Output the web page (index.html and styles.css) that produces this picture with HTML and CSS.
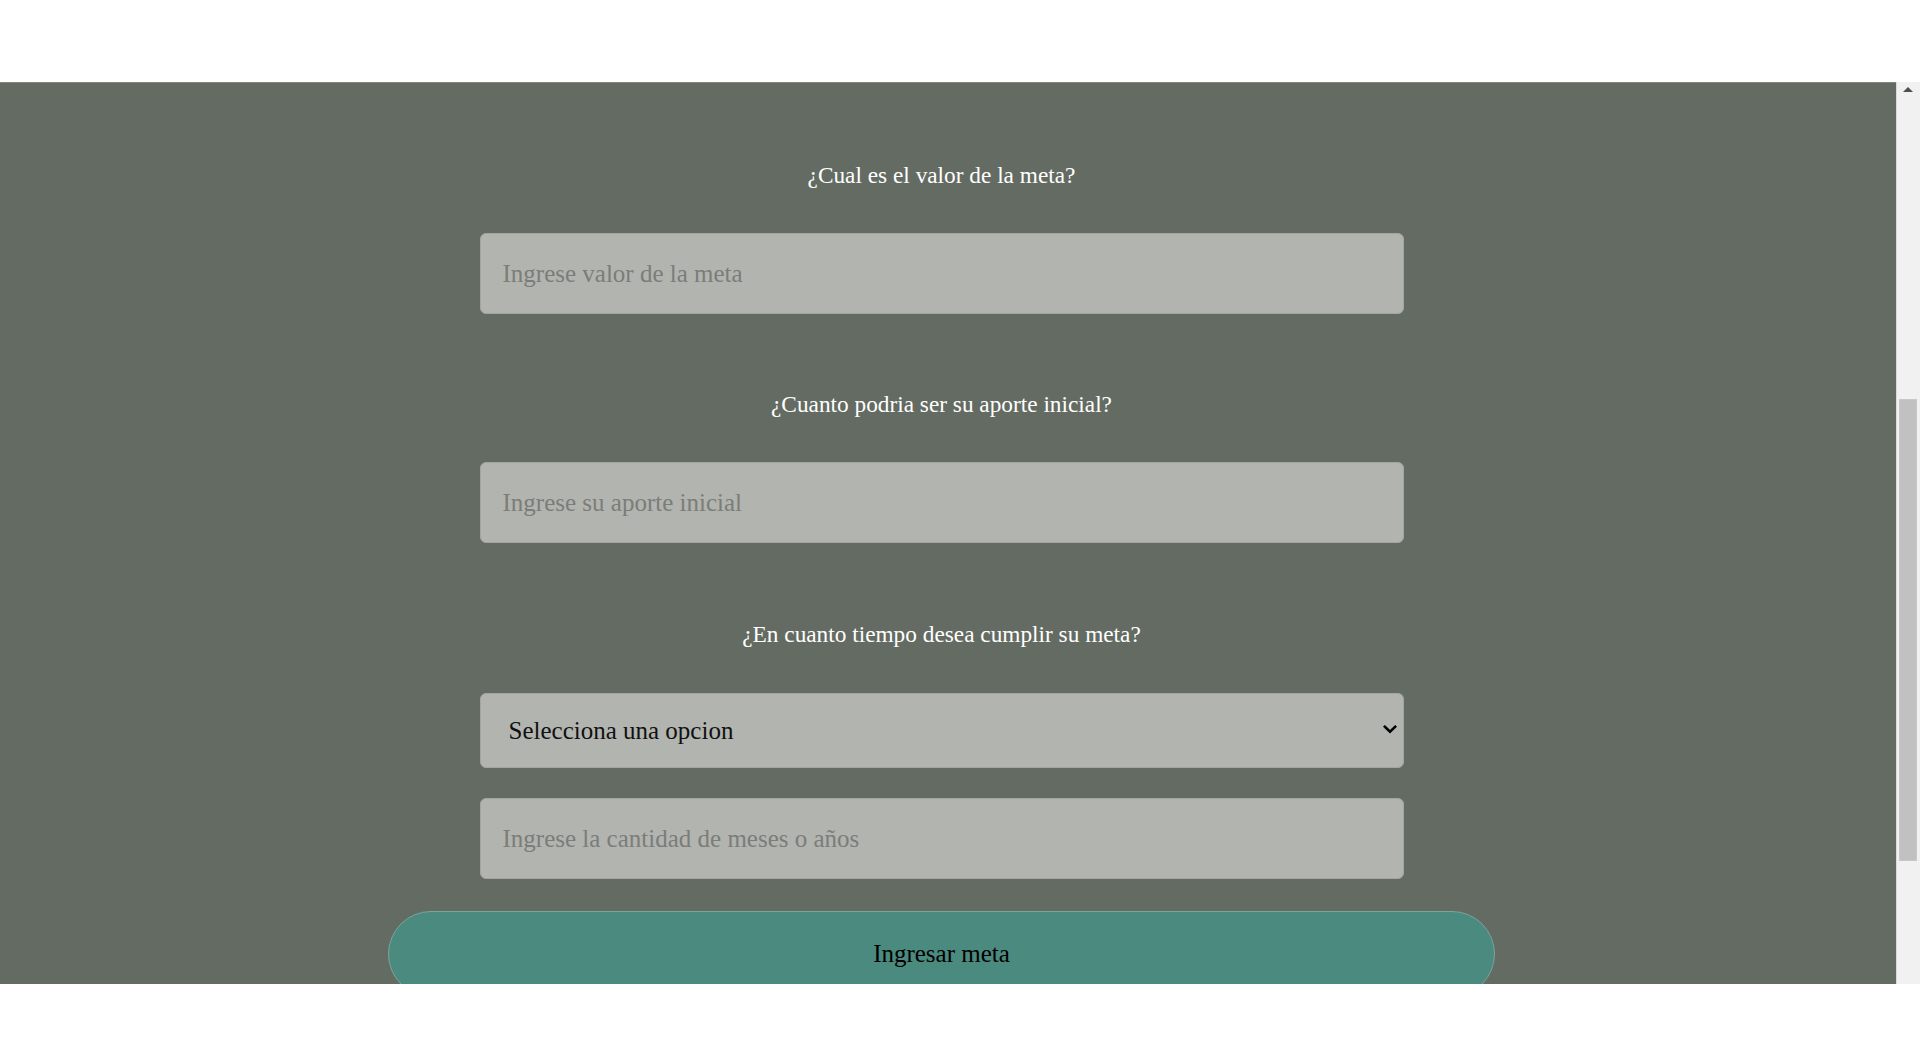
FILE: index.html
```html
<!DOCTYPE html>
<html lang="es">
<head>
<meta charset="utf-8">
<title>Ingresar meta</title>
<link rel="stylesheet" href="styles.css">
</head>
<body>
<div class="page">
  <header class="topbar"></header>
  <div class="viewport">
    <main class="content">
      <form class="goal-form">
        <div class="field">
          <label class="field-label" for="valor">¿Cual es el valor de la meta?</label>
          <input class="field-input" id="valor" type="text" placeholder="Ingrese valor de la meta">
        </div>
        <div class="field field--second">
          <label class="field-label" for="aporte">¿Cuanto podria ser su aporte inicial?</label>
          <input class="field-input" id="aporte" type="text" placeholder="Ingrese su aporte inicial">
        </div>
        <div class="field field--time">
          <label class="field-label" for="periodo">¿En cuanto tiempo desea cumplir su meta?</label>
          <div class="select-wrap">
            <select class="field-select" id="periodo">
              <option>Selecciona una opcion</option>
              <option>Meses</option>
              <option>Años</option>
            </select>
            <svg class="select-chevron" width="14" height="9" viewBox="0 0 14 9" aria-hidden="true">
              <path d="M1.8 1.8 L7 6.8 L12.2 1.8" fill="none" stroke="#000" stroke-width="2.6" stroke-linecap="square"/>
            </svg>
          </div>
          <input class="field-input field-input--period" type="text" placeholder="Ingrese la cantidad de meses o años">
        </div>
        <button class="submit-btn" type="button">Ingresar meta</button>
      </form>
    </main>
    <div class="scrollbar">
      <div class="scroll-arrow"><span class="scroll-arrow-tri"></span></div>
      <div class="scroll-thumb"></div>
    </div>
  </div>
  <footer class="bottombar"></footer>
</div>
</body>
</html>
```
FILE: styles.css
```css
html, body {
  margin: 0;
  padding: 0;
  height: 100%;
  background: #ffffff;
  overflow: hidden;
}

.page {
  display: flex;
  flex-direction: column;
  height: 1055px;
  font-family: "Liberation Serif", "Times New Roman", serif;
}

.topbar {
  height: 82px;
  flex: none;
  background: #ffffff;
}

.viewport {
  display: flex;
  height: 902px;
  flex: none;
}

.content {
  flex: 1;
  box-sizing: border-box;
  background: #646b62;
  border-top: 1px solid #7f857d;
  padding: 79px 13px 0 0;
  overflow: hidden;
}

.goal-form {
  display: flex;
  flex-direction: column;
  align-items: center;
}

.field {
  display: flex;
  flex-direction: column;
  align-items: center;
}

.field--second {
  margin-top: 77px;
}

.field--time {
  margin-top: 78px;
}

.field-label {
  color: #ffffff;
  font-size: 23.3px;
  line-height: 27px;
  margin-bottom: 44px;
}

.field--time .field-label {
  margin-bottom: 45px;
}

.field-input,
.field-select {
  box-sizing: border-box;
  width: 924px;
  background: #b2b4b0;
  border: 1px solid #a2a69f;
  border-radius: 6px;
  font-family: "Liberation Serif", "Times New Roman", serif;
  font-size: 25px;
  color: #111111;
  outline: none;
  margin: 0;
}

.field-input {
  height: 81px;
  padding: 0 0 0 22px;
}

.field-input::placeholder {
  color: #7b7d79;
  opacity: 1;
}

.field-input--period {
  margin-top: 30px;
}

.select-wrap {
  position: relative;
  width: 924px;
}

.field-select {
  display: block;
  height: 75px;
  padding: 0 0 0 28px;
  appearance: none;
  -webkit-appearance: none;
}

.select-chevron {
  position: absolute;
  right: 7px;
  top: 32px;
}

.submit-btn {
  box-sizing: border-box;
  width: 1107px;
  height: 86px;
  margin-top: 32px;
  background: #4b8a7e;
  border: 1px solid #7aa59c;
  border-radius: 43px;
  font-family: "Liberation Serif", "Times New Roman", serif;
  font-size: 25px;
  color: #000000;
  padding: 0;
}

.scrollbar {
  width: 24px;
  flex: none;
  box-sizing: border-box;
  background: #f1f1f1;
  border-left: 1px solid #dadada;
  display: flex;
  flex-direction: column;
}

.scroll-arrow {
  height: 20px;
  display: flex;
  justify-content: center;
  padding-top: 5px;
  box-sizing: border-box;
}

.scroll-arrow-tri {
  width: 0;
  height: 0;
  border-left: 5px solid transparent;
  border-right: 5px solid transparent;
  border-bottom: 5px solid #505050;
  margin-right: 1px;
}

.scroll-thumb {
  margin: 297px 3px 0 2px;
  height: 462px;
  background: #c1c1c1;
  border: 1px solid #c8c8c8;
  box-sizing: border-box;
}

.bottombar {
  flex: 1;
  background: #ffffff;
}
```
